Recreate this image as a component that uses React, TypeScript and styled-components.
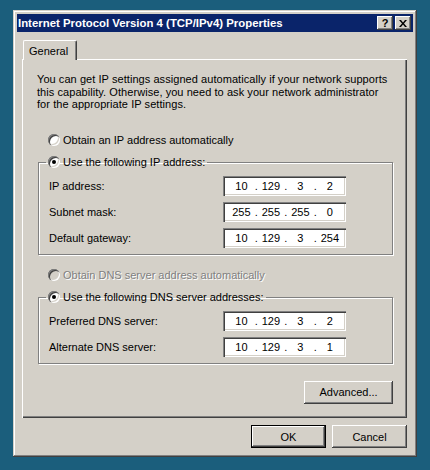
import React from "react";
import styled, { createGlobalStyle, css } from "styled-components";

const FACE = "#d4d0c8";

const GlobalStyle = createGlobalStyle`
  html, body { margin: 0; padding: 0; background: #1b5e7c; }
  body {
    font-family: "Liberation Sans", Arial, sans-serif;
    font-size: 11px;
    color: #000;
  }
`;

const Desktop = styled.div`
  height: 470px;
  box-sizing: border-box;
  padding: 10px 0 0 13px;
`;

const Window = styled.div`
  width: 404px;
  height: 447px;
  box-sizing: border-box;
  padding: 4px;
  background: ${FACE};
  box-shadow: inset -1px -1px 0 #404040, inset 1px 1px 0 ${FACE},
    inset -2px -2px 0 #808080, inset 2px 2px 0 #fff;
  display: flex;
  flex-direction: column;
`;

const TitleBar = styled.div`
  height: 18px;
  background: #0a246a;
  display: flex;
  align-items: center;
  padding: 0 2px 0 1px;
  color: #fff;
  font-weight: bold;
  font-size: 11.4px;
`;

const TitleText = styled.span`
  flex: 1;
  white-space: nowrap;
`;

const TitleButtons = styled.div`
  display: flex;
  gap: 2px;
`;

const raised = css`
  box-shadow: inset -1px -1px 0 #404040, inset 1px 1px 0 #fff,
    inset -2px -2px 0 #808080, inset 2px 2px 0 ${FACE};
`;

const TitleButton = styled.button`
  width: 16px;
  height: 14px;
  padding: 0;
  border: 0;
  background: ${FACE};
  ${raised};
  display: flex;
  align-items: center;
  justify-content: center;
  font: bold 11px "Liberation Sans", Arial, sans-serif;
  color: #000;
`;

const Body = styled.div`
  flex: 1;
  display: flex;
  flex-direction: column;
  padding: 8px 6px 5px 5px;
`;

const TabStrip = styled.div`
  display: flex;
  padding-left: 1px;
`;

const Tab = styled.div`
  position: relative;
  z-index: 1;
  height: 20px;
  box-sizing: border-box;
  padding: 0 8px 0 5px;
  margin-bottom: -1px;
  display: flex;
  align-items: center;
  background: ${FACE};
  border-left: 1px solid #fff;
  border-top: 1px solid #fff;
  border-right: 1px solid #404040;
  box-shadow: inset -1px 0 0 #808080;
  border-top-left-radius: 2px;
  border-top-right-radius: 2px;
`;

const Panel = styled.div`
  flex: 1;
  display: flex;
  flex-direction: column;
  padding: 14px 14px 0 15px;
  background: ${FACE};
  box-shadow: inset 1px 1px 0 #fff, inset -1px -1px 0 #404040,
    inset -2px -2px 0 #808080;
`;

const Description = styled.p`
  margin: 0;
  line-height: 12.5px;
  white-space: nowrap;
  letter-spacing: 0.06px;
`;

const RadioRow = styled.div<{ $mt: number; $disabled?: boolean }>`
  display: flex;
  align-items: center;
  gap: 3px;
  height: 13px;
  padding-left: 11px;
  margin-top: ${(p) => p.$mt}px;
  white-space: nowrap;
  ${(p) =>
    p.$disabled &&
    css`
      color: #808080;
      text-shadow: 1px 1px 0 #fff;
    `}
`;

const RadioCircle = styled.span<{ $checked?: boolean; $disabled?: boolean }>`
  position: relative;
  flex: none;
  width: 12px;
  height: 12px;
  border-radius: 50%;
  background: ${(p) => (p.$disabled ? FACE : "#fff")};
  box-shadow: inset 1px 1px 0 #808080, inset 2px 2px 0 #404040,
    inset -1px -1px 0 #fff, inset -2px -2px 0 ${FACE};
  &::after {
    content: "";
    display: ${(p) => (p.$checked ? "block" : "none")};
    position: absolute;
    left: 4px;
    top: 4px;
    width: 4px;
    height: 4px;
    border-radius: 50%;
    background: #000;
  }
`;

const GroupBox = styled.fieldset`
  margin: 9px 0 0 1px;
  padding: 7px 46px 6px 10px;
  border: 1px solid #808080;
  box-shadow: inset 1px 1px 0 #fff, 1px 1px 0 #fff;
  min-width: 0;
`;

const GroupLegend = styled.legend`
  margin-left: -3px;
  padding: 0 2px;
  display: flex;
  align-items: center;
  gap: 3px;
  line-height: 13px;
  height: 13px;
  white-space: nowrap;
`;

const Rows = styled.div`
  display: flex;
  flex-direction: column;
  gap: 6px;
`;

const Row = styled.div`
  display: flex;
  align-items: center;
  height: 20px;
`;

const FieldLabel = styled.span`
  width: 175px;
  white-space: nowrap;
`;

const IpBox = styled.div`
  width: 123px;
  height: 20px;
  box-sizing: border-box;
  padding-left: 6px;
  display: flex;
  align-items: center;
  background: #fff;
  box-shadow: inset 1px 1px 0 #808080, inset 2px 2px 0 #404040,
    inset -1px -1px 0 #fff, inset -2px -2px 0 ${FACE};
`;

const Octet = styled.span`
  width: 24px;
  text-align: center;
`;

const Dot = styled.span`
  width: 5.5px;
  text-align: center;
`;

const ActionRow = styled.div`
  display: flex;
  justify-content: flex-end;
  margin-top: 17px;
`;

const ButtonRow = styled.div`
  display: flex;
  justify-content: flex-end;
  gap: 6px;
  margin-top: 7px;
`;

const PushButton = styled.button<{ $w: number; $default?: boolean }>`
  width: ${(p) => p.$w}px;
  height: 23px;
  box-sizing: border-box;
  padding: 0;
  border: 0;
  background: ${FACE};
  font: 11px "Liberation Sans", Arial, sans-serif;
  color: #000;
  ${raised};
  ${(p) =>
    p.$default &&
    css`
      border: 1px solid #000;
    `}
`;

function Radio({ checked, disabled }: { checked?: boolean; disabled?: boolean }) {
  return <RadioCircle $checked={checked} $disabled={disabled} />;
}

function IpField({ value }: { value: string }) {
  const parts = value.split(".");
  return (
    <IpBox>
      {parts.map((p, i) => (
        <React.Fragment key={i}>
          {i > 0 && <Dot>.</Dot>}
          <Octet>{p}</Octet>
        </React.Fragment>
      ))}
    </IpBox>
  );
}

function CloseGlyph() {
  return (
    <svg width="8" height="7" viewBox="0 0 8 7">
      <path d="M0 0h2l2 2.5L6 0h2L5 3.5 8 7H6L4 4.5 2 7H0l3-3.5z" fill="#000" />
    </svg>
  );
}

const ipRows = [
  { label: "IP address:", value: "10.129.3.2" },
  { label: "Subnet mask:", value: "255.255.255.0" },
  { label: "Default gateway:", value: "10.129.3.254" },
];

const dnsRows = [
  { label: "Preferred DNS server:", value: "10.129.3.2" },
  { label: "Alternate DNS server:", value: "10.129.3.1" },
];

export default function App() {
  return (
    <>
      <GlobalStyle />
      <Desktop>
        <Window>
          <TitleBar>
            <TitleText>Internet Protocol Version 4 (TCP/IPv4) Properties</TitleText>
            <TitleButtons>
              <TitleButton>?</TitleButton>
              <TitleButton>
                <CloseGlyph />
              </TitleButton>
            </TitleButtons>
          </TitleBar>
          <Body>
            <TabStrip>
              <Tab>General</Tab>
            </TabStrip>
            <Panel>
              <Description>
                You can get IP settings assigned automatically if your network supports
                <br />
                this capability. Otherwise, you need to ask your network administrator
                <br />
                for the appropriate IP settings.
              </Description>
              <RadioRow $mt={23}>
                <Radio />
                Obtain an IP address automatically
              </RadioRow>
              <GroupBox>
                <GroupLegend>
                  <Radio checked />
                  Use the following IP address:
                </GroupLegend>
                <Rows>
                  {ipRows.map((r) => (
                    <Row key={r.label}>
                      <FieldLabel>{r.label}</FieldLabel>
                      <IpField value={r.value} />
                    </Row>
                  ))}
                </Rows>
              </GroupBox>
              <RadioRow $mt={14} $disabled>
                <Radio disabled />
                Obtain DNS server address automatically
              </RadioRow>
              <GroupBox>
                <GroupLegend>
                  <Radio checked />
                  Use the following DNS server addresses:
                </GroupLegend>
                <Rows>
                  {dnsRows.map((r) => (
                    <Row key={r.label}>
                      <FieldLabel>{r.label}</FieldLabel>
                      <IpField value={r.value} />
                    </Row>
                  ))}
                </Rows>
              </GroupBox>
              <ActionRow>
                <PushButton $w={89}>Advanced...</PushButton>
              </ActionRow>
            </Panel>
            <ButtonRow>
              <PushButton $w={75} $default>
                OK
              </PushButton>
              <PushButton $w={75}>Cancel</PushButton>
            </ButtonRow>
          </Body>
        </Window>
      </Desktop>
    </>
  );
}
